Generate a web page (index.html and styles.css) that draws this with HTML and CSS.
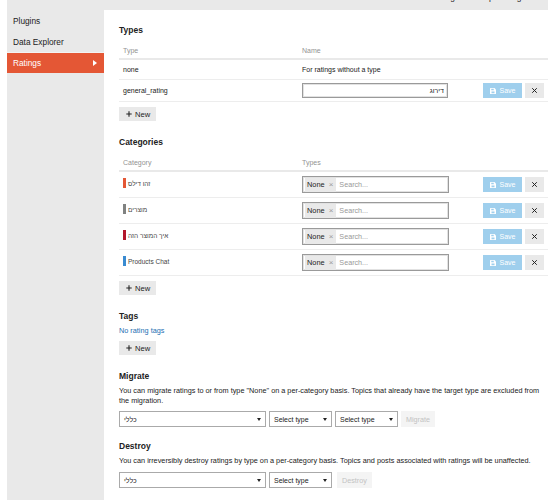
FILE: index.html
```html
<!DOCTYPE html>
<html lang="en">
  <head>
    <meta charset="UTF-8" />
    <meta name="viewport" content="width=device-width, initial-scale=1.0" />
    <title>Ratings</title>
    <link rel="stylesheet" href="styles.css">
  </head>
  <body>
    <div class="admin">
      <div class="top-bar"><span class="top-links">Logs &nbsp; Backups &nbsp; Plugins</span></div>
      <div class="admin-body">
        <ul class="admin-nav">
          <li><a href="#">Plugins</a></li>
          <li><a href="#">Data Explorer</a></li>
          <li class="active"><a href="#">Ratings <span class="nav-caret"></span></a></li>
        </ul>

        <div class="admin-content">
          <!-- rating types -->
          <section class="section">
            <h3>Types</h3>
            <table class="grid types">
              <colgroup>
                <col class="col-first" />
                <col class="col-second" />
                <col class="col-actions" />
              </colgroup>
              <thead>
                <tr><th>Type</th><th>Name</th><th></th></tr>
              </thead>
              <tbody>
                <tr>
                  <td>none</td>
                  <td>For ratings without a type</td>
                  <td></td>
                </tr>
                <tr>
                  <td>general_rating</td>
                  <td><input class="text-input" type="text" dir="rtl" value="דירוג" /></td>
                  <td>
                    <div class="actions">
                      <button class="btn-save" type="button">
                        <svg class="save-icon" viewBox="0 0 12 12" width="6" height="6"><path d="M0 1a1 1 0 0 1 1-1h8l3 3v8a1 1 0 0 1-1 1H1a1 1 0 0 1-1-1z" fill="#fff"/><rect x="2.5" y="1.5" width="5" height="3" fill="#9fcfed"/><rect x="3" y="7" width="6" height="3.5" rx="0.5" fill="#9fcfed"/></svg>
                        Save
                      </button>
                      <button class="btn-close" type="button">
                        <svg viewBox="0 0 10 10" width="5" height="5"><path d="M1 1l8 8M9 1l-8 8" stroke="#222" stroke-width="2" stroke-linecap="round"/></svg>
                      </button>
                    </div>
                  </td>
                </tr>
              </tbody>
            </table>
            <button class="btn-new" type="button">
              <svg viewBox="0 0 10 10" width="6" height="6"><path d="M5 0.5v9M0.5 5h9" stroke="#222" stroke-width="1.8"/></svg>
              New
            </button>
          </section>

          <!-- categories and the types they use -->
          <section class="section">
            <h3>Categories</h3>
            <table class="grid categories">
              <colgroup>
                <col class="col-first" />
                <col class="col-second" />
                <col class="col-actions" />
              </colgroup>
              <thead>
                <tr><th>Category</th><th>Types</th><th></th></tr>
              </thead>
              <tbody id="categoryRows"></tbody>
            </table>
            <button class="btn-new" type="button">
              <svg viewBox="0 0 10 10" width="6" height="6"><path d="M5 0.5v9M0.5 5h9" stroke="#222" stroke-width="1.8"/></svg>
              New
            </button>
          </section>

          <section class="section">
            <h3>Tags</h3>
            <p class="note"><a href="#" class="link">No rating tags</a></p>
            <button class="btn-new" type="button">
              <svg viewBox="0 0 10 10" width="6" height="6"><path d="M5 0.5v9M0.5 5h9" stroke="#222" stroke-width="1.8"/></svg>
              New
            </button>
          </section>

          <section class="section">
            <h3>Migrate</h3>
            <p class="note">You can migrate ratings to or from type "None" on a per-category basis. Topics that already have the target type are excluded from the migration.</p>
            <div class="select-row">
              <div class="select wide"><span dir="rtl">כללי</span><span class="caret"></span></div>
              <div class="select"><span>Select type</span><span class="caret"></span></div>
              <div class="select"><span>Select type</span><span class="caret"></span></div>
              <button class="btn-disabled migrate" type="button" disabled>Migrate</button>
            </div>
          </section>

          <section class="section last">
            <h3>Destroy</h3>
            <p class="note">You can irreversibly destroy ratings by type on a per-category basis. Topics and posts associated with ratings will be unaffected.</p>
            <div class="select-row">
              <div class="select wide"><span dir="rtl">כללי</span><span class="caret"></span></div>
              <div class="select"><span>Select type</span><span class="caret"></span></div>
              <button class="btn-disabled destroy" type="button" disabled>Destroy</button>
            </div>
          </section>
        </div>
      </div>
    </div>

    <script>
      const categories = [
        { name: "זהו דילס", color: "#e45735" },
        { name: "מוצרים", color: "#808281" },
        { name: "איך המוצר הזה", color: "#b3172d" },
        { name: "Products Chat", color: "#3a8bd1" },
      ];

      const saveIcon =
        '<svg class="save-icon" viewBox="0 0 12 12" width="6" height="6"><path d="M0 1a1 1 0 0 1 1-1h8l3 3v8a1 1 0 0 1-1 1H1a1 1 0 0 1-1-1z" fill="#fff"/><rect x="2.5" y="1.5" width="5" height="3" fill="#9fcfed"/><rect x="3" y="7" width="6" height="3.5" rx="0.5" fill="#9fcfed"/></svg>';
      const closeIcon =
        '<svg viewBox="0 0 10 10" width="5" height="5"><path d="M1 1l8 8M9 1l-8 8" stroke="#222" stroke-width="2" stroke-linecap="round"/></svg>';

      const rows = document.getElementById("categoryRows");
      categories.forEach((cat) => {
        const tr = document.createElement("tr");
        tr.innerHTML = `
          <td><span class="badge"><span class="swatch" style="background:${cat.color}"></span><span dir="auto">${cat.name}</span></span></td>
          <td>
            <div class="tag-chooser">
              <span class="chip">None<span class="chip-x">&times;</span></span>
              <span class="placeholder">Search...</span>
            </div>
          </td>
          <td>
            <div class="actions">
              <button class="btn-save" type="button">${saveIcon} Save</button>
              <button class="btn-close" type="button">${closeIcon}</button>
            </div>
          </td>`;
        rows.appendChild(tr);
      });
    </script>
  </body>
</html>
```

FILE: styles.css
```css
body {
  margin: 0;
  font-family: "Liberation Sans", Arial, sans-serif;
  font-size: 7px;
  color: #222;
  background: #fff;
}
.admin {
  margin-left: 7px;
  width: 541px;
  min-height: 500px;
  background: #e9e9e9;
}
.top-bar {
  height: 10px;
  overflow: hidden;
  text-align: right;
}
.top-links {
  display: block;
  margin-top: -8px;
  padding-right: 16px;
  font-size: 8.3px;
  line-height: 10px;
  color: #222;
}
.admin-body {
  display: flex;
}

/* left navigation */
.admin-nav {
  width: 97px;
  margin: 0;
  padding: 0;
  list-style: none;
}
.admin-nav a {
  display: flex;
  justify-content: space-between;
  align-items: center;
  height: 21px;
  padding: 0 7px 0 6px;
  font-size: 8.3px;
  color: #222;
  text-decoration: none;
}
.admin-nav .active {
  border-top: 1px solid #f3f3f3;
}
.admin-nav .active a {
  height: 20px;
  background: #e45735;
  color: #fff;
}
.nav-caret {
  width: 0;
  height: 0;
  border-top: 3px solid transparent;
  border-bottom: 3px solid transparent;
  border-left: 4px solid #fff;
}

/* main panel */
.admin-content {
  flex: 1;
  background: #fff;
  padding: 15px 0 20px 15px;
}
.section + .section {
  margin-top: 16px;
}
.section.last {
  margin-top: 14px;
}
h3 {
  margin: 0;
  font-size: 8.5px;
  line-height: 10px;
  font-weight: bold;
  color: #222;
}

.grid {
  width: 100%;
  margin-top: 8px;
  border-collapse: collapse;
  table-layout: fixed;
}
.col-first {
  width: 179px;
}
.col-actions {
  width: 70px;
}
.grid th {
  text-align: left;
  font-weight: normal;
  color: #939393;
  padding: 3px 4px 2px;
  line-height: 10px;
  border-bottom: 2px solid #e9e9e9;
}
.grid td {
  padding: 3px 4px;
  line-height: 13px;
  border-bottom: 1px solid #ededed;
  vertical-align: middle;
}
.grid.categories td {
  padding: 4px 4px;
}

.text-input {
  display: block;
  box-sizing: border-box;
  width: 146px;
  height: 15px;
  margin: 0;
  padding: 0 3px;
  border: 1px solid #9a9a9a;
  box-shadow: inset 0 0 0 1px #e2e2e2;
  font-family: inherit;
  font-size: 7px;
  color: #222;
}

.tag-chooser {
  display: flex;
  align-items: center;
  box-sizing: border-box;
  width: 147px;
  height: 17px;
  padding: 0 2px;
  border: 1px solid #9a9a9a;
  box-shadow: inset 0 0 0 1px #e2e2e2;
}
.chip {
  display: flex;
  align-items: center;
  height: 14px;
  padding: 0 3px 0 2px;
  background: #e9e9e9;
  font-size: 7.4px;
  color: #222;
}
.chip-x {
  margin-left: 4px;
  color: #999;
  font-size: 8px;
}
.placeholder {
  margin-left: 3px;
  color: #999;
  font-size: 7.2px;
}

.badge {
  display: inline-flex;
  align-items: center;
  font-size: 6.5px;
  color: #444;
}
.swatch {
  display: inline-block;
  width: 3px;
  height: 10px;
  margin-right: 2px;
}

.actions {
  display: flex;
  justify-content: flex-end;
  gap: 3px;
}
button {
  font-family: inherit;
  border: none;
  margin: 0;
  cursor: pointer;
}
.btn-save {
  display: inline-flex;
  align-items: center;
  justify-content: center;
  gap: 4px;
  width: 39px;
  height: 15px;
  padding: 0;
  background: #9fcfed;
  color: #fff;
  font-size: 7px;
}
.btn-close {
  display: inline-flex;
  align-items: center;
  justify-content: center;
  width: 19px;
  height: 15px;
  padding: 0;
  background: #e9e9e9;
}
.btn-new {
  display: inline-flex;
  align-items: center;
  gap: 3px;
  height: 14px;
  margin-top: 5px;
  padding: 0 6px 0 7px;
  background: #e9e9e9;
  color: #222;
  font-size: 7.6px;
}

.note {
  margin: 5px 0 0;
  font-size: 7.3px;
  line-height: 10px;
  color: #222;
}
.link {
  color: #1d6fb3;
  text-decoration: none;
}

.select-row {
  display: flex;
  align-items: center;
  gap: 3px;
  margin-top: 5px;
}
.section.last .select-row {
  margin-top: 6px;
}
.select {
  display: flex;
  align-items: center;
  justify-content: space-between;
  box-sizing: border-box;
  width: 63px;
  height: 16px;
  padding: 0 4px 0 4px;
  border: 1px solid #aaa;
  background: #fff;
  color: #222;
  font-size: 7px;
}
.select.wide {
  width: 147px;
}
.caret {
  width: 0;
  height: 0;
  border-left: 2px solid transparent;
  border-right: 2px solid transparent;
  border-top: 3px solid #222;
}
.btn-disabled {
  height: 16px;
  padding: 0 5px;
  background: #f4f4f4;
  color: #c2c2c2;
  font-size: 7.2px;
  cursor: default;
}
.btn-disabled.destroy {
  margin-left: 2px;
}
```
